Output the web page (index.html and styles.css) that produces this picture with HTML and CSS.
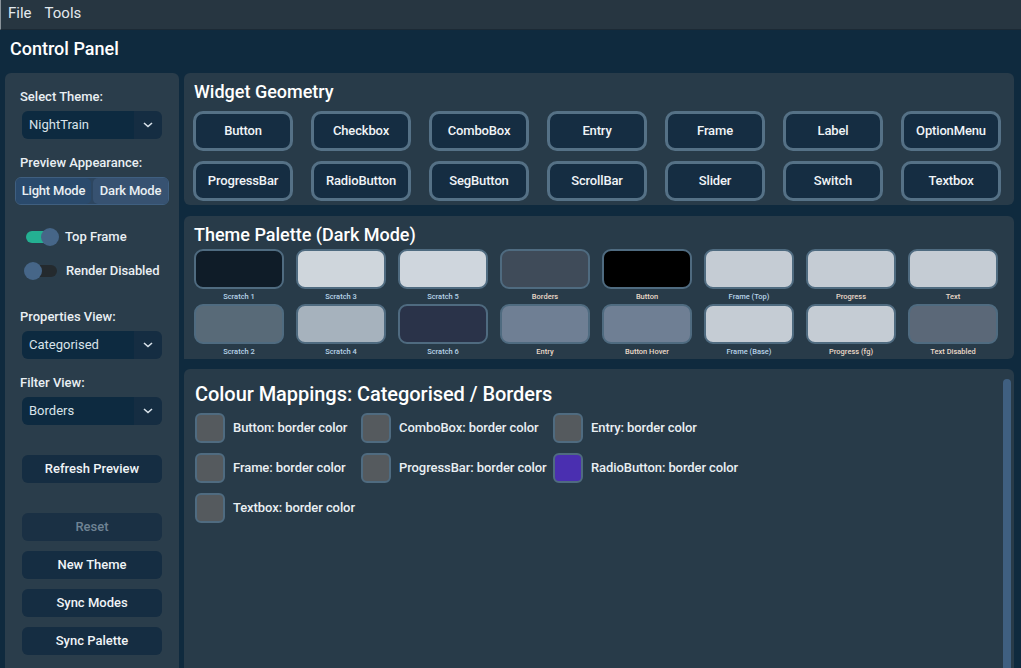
FILE: index.html
```html
<!DOCTYPE html>
<html lang="en">
<head>
	<meta charset="UTF-8"/>
	<title>Control Panel</title>
	<link rel="stylesheet" href="styles.css">
</head>
<body>

<div class="menubar">
	<span>File</span>
	<span>Tools</span>
</div>

<div class="titlebar">Control Panel</div>

<div class="content">

	<div class="sidebar">
		<div class="side-label">Select Theme:</div>
		<div class="combo">
			<div class="combo-value">NightTrain</div>
			<div class="combo-arrow"><svg width="10" height="6" viewBox="0 0 10 6"><path d="M1 1l4 3.5L9 1" fill="none" stroke="#d8e2ea" stroke-width="1.6"/></svg></div>
		</div>

		<div class="side-label label-preview">Preview Appearance:</div>
		<div class="segmented">
			<div class="seg seg-on">Light Mode</div>
			<div class="seg seg-off">Dark Mode</div>
		</div>

		<div class="switch-row switch-first">
			<div class="switch switch-on"><div class="track"></div><div class="thumb"></div></div>
			<div class="switch-text">Top Frame</div>
		</div>
		<div class="switch-row switch-second">
			<div class="switch switch-off"><div class="track"></div><div class="thumb"></div></div>
			<div class="switch-text switch-text-wide">Render Disabled</div>
		</div>

		<div class="side-label label-props">Properties View:</div>
		<div class="combo">
			<div class="combo-value">Categorised</div>
			<div class="combo-arrow"><svg width="10" height="6" viewBox="0 0 10 6"><path d="M1 1l4 3.5L9 1" fill="none" stroke="#d8e2ea" stroke-width="1.6"/></svg></div>
		</div>

		<div class="side-label label-filter">Filter View:</div>
		<div class="combo">
			<div class="combo-value">Borders</div>
			<div class="combo-arrow"><svg width="10" height="6" viewBox="0 0 10 6"><path d="M1 1l4 3.5L9 1" fill="none" stroke="#d8e2ea" stroke-width="1.6"/></svg></div>
		</div>

		<div class="side-btn btn-refresh">Refresh Preview</div>
		<div class="side-btn btn-reset">Reset</div>
		<div class="side-btn">New Theme</div>
		<div class="side-btn">Sync Modes</div>
		<div class="side-btn">Sync Palette</div>
	</div>

	<div class="main">

		<div class="panel panel-geometry">
			<div class="panel-title">Widget Geometry</div>
			<div class="geo-grid">
				<div class="geo-btn">Button</div>
				<div class="geo-btn">Checkbox</div>
				<div class="geo-btn">ComboBox</div>
				<div class="geo-btn">Entry</div>
				<div class="geo-btn">Frame</div>
				<div class="geo-btn">Label</div>
				<div class="geo-btn">OptionMenu</div>
				<div class="geo-btn">ProgressBar</div>
				<div class="geo-btn">RadioButton</div>
				<div class="geo-btn">SegButton</div>
				<div class="geo-btn">ScrollBar</div>
				<div class="geo-btn">Slider</div>
				<div class="geo-btn">Switch</div>
				<div class="geo-btn">Textbox</div>
			</div>
		</div>

		<div class="panel panel-palette">
			<div class="panel-title">Theme Palette (Dark Mode)</div>
			<div class="palette-grid">
				<div class="pal"><div class="pal-box c-scratch1"></div><div class="pal-name name-cool">Scratch 1</div></div>
				<div class="pal"><div class="pal-box c-scratch3"></div><div class="pal-name name-cool">Scratch 3</div></div>
				<div class="pal"><div class="pal-box c-scratch5"></div><div class="pal-name name-cool">Scratch 5</div></div>
				<div class="pal"><div class="pal-box c-borders"></div><div class="pal-name name-warm">Borders</div></div>
				<div class="pal"><div class="pal-box c-button"></div><div class="pal-name name-warm">Button</div></div>
				<div class="pal"><div class="pal-box c-light"></div><div class="pal-name name-cool">Frame (Top)</div></div>
				<div class="pal"><div class="pal-box c-light"></div><div class="pal-name name-warm">Progress</div></div>
				<div class="pal"><div class="pal-box c-light"></div><div class="pal-name name-warm">Text</div></div>
				<div class="pal"><div class="pal-box c-scratch2"></div><div class="pal-name name-cool">Scratch 2</div></div>
				<div class="pal"><div class="pal-box c-scratch4"></div><div class="pal-name name-cool">Scratch 4</div></div>
				<div class="pal"><div class="pal-box c-scratch6"></div><div class="pal-name name-cool">Scratch 6</div></div>
				<div class="pal"><div class="pal-box c-entry"></div><div class="pal-name name-warm">Entry</div></div>
				<div class="pal"><div class="pal-box c-entry"></div><div class="pal-name name-warm">Button Hover</div></div>
				<div class="pal"><div class="pal-box c-light"></div><div class="pal-name name-cool">Frame (Base)</div></div>
				<div class="pal"><div class="pal-box c-light"></div><div class="pal-name name-warm">Progress (fg)</div></div>
				<div class="pal"><div class="pal-box c-disabled"></div><div class="pal-name name-warm">Text Disabled</div></div>
			</div>
		</div>

		<div class="panel panel-mappings">
			<div class="mappings-body">
				<div class="mappings-title">Colour Mappings: Categorised / Borders</div>
				<div class="map-grid">
					<div class="map-item"><div class="map-box"></div><div class="map-text">Button: border color</div></div>
					<div class="map-item"><div class="map-box"></div><div class="map-text">ComboBox: border color</div></div>
					<div class="map-item"><div class="map-box"></div><div class="map-text">Entry: border color</div></div>
					<div class="map-item"><div class="map-box"></div><div class="map-text">Frame: border color</div></div>
					<div class="map-item"><div class="map-box"></div><div class="map-text">ProgressBar: border color</div></div>
					<div class="map-item"><div class="map-box map-purple"></div><div class="map-text">RadioButton: border color</div></div>
					<div class="map-item"><div class="map-box"></div><div class="map-text">Textbox: border color</div></div>
				</div>
			</div>
			<div class="scrollbar"></div>
		</div>

	</div>
</div>

</body>
</html>
```

FILE: styles.css
```css
html {
	font-family: Roboto, "Liberation Sans", sans-serif;
	font-weight: 500;
	font-size: 13px;
}
body {
	margin: 0;
	width: 1021px;
	height: 668px;
	overflow: hidden;
	display: flex;
	flex-direction: column;
	background-color: #0f2a3e;
	color: #e9eff3;
}

/* top */
.menubar {
	flex: none;
	display: flex;
	align-items: center;
	gap: 13px;
	padding: 0 0 3px 7px;
	height: 26px;
	background-color: #273641;
	border-left: 1px solid #8a939a;
	border-bottom: 1px solid #1c2a35;
	font-size: 15px;
	font-weight: 400;
	color: #e3e9ee;
}
.titlebar {
	height: 36px;
	margin-bottom: 7px;
	flex: none;
	display: flex;
	align-items: center;
	padding-left: 10px;
	font-size: 18px;
	color: #fff;
}
.content {
	flex: 1;
	display: flex;
	gap: 5px;
	padding-left: 5px;
	min-height: 0;
}

/* sidebar */
.sidebar {
	width: 174px;
	flex: none;
	padding: 15px 0 0 0;
	background-color: #2a3d4b;
	border-radius: 6px 6px 0 0;
	box-sizing: border-box;
}
.side-label {
	height: 16px;
	line-height: 18px;
	margin-left: 15px;
}
.label-preview { margin-top: 15px; }
.label-props { margin-top: 28px; }
.label-filter { margin-top: 15px; }
.combo {
	display: flex;
	width: 140px;
	height: 28px;
	margin: 7px 0 0 17px;
	border-radius: 6px;
	overflow: hidden;
	font-weight: 400;
	color: #d9e3ea;
}
.combo-value {
	flex: 1;
	line-height: 28px;
	padding-left: 7px;
	background-color: #0d2a40;
}
.combo-arrow {
	width: 28px;
	display: flex;
	align-items: center;
	justify-content: center;
	background-color: #152d42;
}
.segmented {
	display: flex;
	gap: 2px;
	width: 154px;
	height: 28px;
	margin: 7px 0 0 10px;
	box-sizing: border-box;
	border: 1px solid #3f5f80;
	border-radius: 6px;
	background-color: #2d4660;
}
.seg {
	display: flex;
	align-items: center;
	justify-content: center;
	padding-bottom: 2px;
	border-radius: 5px;
	letter-spacing: -0.2px;
}
.seg-on {
	width: 75px;
	background-color: #2a4a6c;
}
.seg-off {
	flex: 1;
	background-color: #375271;
}
.switch-row {
	display: flex;
	align-items: center;
	height: 18px;
}
.switch-first { margin-top: 23px; }
.switch-second { margin-top: 16px; }
.switch {
	position: relative;
	width: 36px;
	height: 18px;
	margin-left: 19px;
}
.track {
	position: absolute;
	top: 3px;
	height: 12px;
	border-radius: 6px;
}
.thumb {
	position: absolute;
	top: 0;
	width: 18px;
	height: 18px;
	border-radius: 50%;
	background-color: #466688;
}
.switch-on .track {
	left: 2px;
	width: 30px;
	background-color: #24b092;
}
.switch-on .thumb { left: 17px; }
.switch-off .track {
	left: 4px;
	width: 29px;
	background-color: #242a2e;
}
.switch-off .thumb { left: 0; }
.switch-text {
	margin-left: 5px;
	padding-bottom: 2px;
}
.switch-text-wide {
	margin-left: 6px;
	letter-spacing: -0.1px;
}
.side-btn {
	width: 140px;
	height: 28px;
	margin: 10px 0 0 17px;
	border-radius: 6px;
	background-color: #152d42;
	line-height: 28px;
	text-align: center;
	color: #f0f4f7;
}
.btn-refresh { margin-top: 30px; }
.btn-reset {
	margin-top: 30px;
	background-color: #1a3044;
	color: #6f8394;
}

/* right column */
.main {
	flex: 1;
	display: flex;
	flex-direction: column;
	gap: 11px;
	padding-right: 7px;
	min-width: 0;
}
.panel {
	background-color: #283b49;
	border-radius: 6px;
	box-sizing: border-box;
}
.panel-title {
	height: 22px;
	line-height: 24px;
	font-size: 18px;
	color: #fff;
	margin-left: 10px;
}
.panel-geometry {
	height: 132px;
	padding-top: 7px;
}
.geo-grid {
	display: grid;
	grid-template-columns: repeat(7, 100px);
	grid-auto-rows: 40px;
	column-gap: 18px;
	row-gap: 10px;
	margin: 9px 0 0 9px;
}
.geo-btn {
	display: flex;
	align-items: center;
	justify-content: center;
	box-sizing: border-box;
	border: 3px solid #557186;
	border-radius: 10px;
	padding-bottom: 2px;
	background-color: #152d42;
	letter-spacing: -0.15px;
	color: #f0f4f7;
}
.panel-palette {
	height: 143px;
	padding-top: 7px;
	border-radius: 6px 6px 6px 0;
}
.palette-grid {
	display: grid;
	grid-template-columns: repeat(8, 90px);
	column-gap: 12px;
	row-gap: 0;
	margin: 4px 0 0 10px;
}
.pal {
	height: 55px;
}
.pal-box {
	height: 40px;
	box-sizing: border-box;
	border: 2px solid #4f6b80;
	border-radius: 9px;
}
.pal-name {
	margin-top: 3px;
	height: 10px;
	line-height: 10px;
	font-size: 7.5px;
	text-align: center;
}
.name-cool { color: #b7d3e8; }
.name-warm { color: #ead9c8; }
.c-scratch1 { background-color: #0f1c28; }
.c-scratch2 { background-color: #586a78; }
.c-scratch3 { background-color: #cfd6dc; }
.c-scratch4 { background-color: #a6b2bd; }
.c-scratch5 { background-color: #cfd6dd; }
.c-scratch6 { background-color: #2a3349; }
.c-borders { background-color: #3f4b59; }
.c-button { background-color: #000; }
.c-entry { background-color: #6f7f94; }
.c-light { background-color: #c5ccd4; }
.c-disabled { background-color: #5b6878; }

.panel-mappings {
	flex: 1;
	display: flex;
	margin-top: -1px;
	border-radius: 6px 6px 0 0;
	min-height: 0;
}
.mappings-body {
	flex: 1;
	padding: 13px 0 0 11px;
}
.mappings-title {
	height: 24px;
	line-height: 24px;
	font-size: 20px;
	letter-spacing: -0.05px;
	color: #fff;
}
.map-grid {
	display: grid;
	grid-template-columns: 166px 192px auto;
	grid-auto-rows: 30px;
	row-gap: 10px;
	justify-content: start;
	margin-top: 7px;
}
.map-item {
	display: flex;
	align-items: center;
	gap: 8px;
}
.map-box {
	width: 30px;
	height: 30px;
	box-sizing: border-box;
	border: 2px solid #4f6b80;
	border-radius: 6px;
	background-color: #555a5e;
}
.map-purple { background-color: #4a2fb0; }
.map-text {
	white-space: nowrap;
	padding-bottom: 2px;
	letter-spacing: -0.08px;
}
.scrollbar {
	width: 8px;
	margin: 10px 3px 0 0;
	border-radius: 4px 4px 0 0;
	background-color: #3f5f80;
}
```
